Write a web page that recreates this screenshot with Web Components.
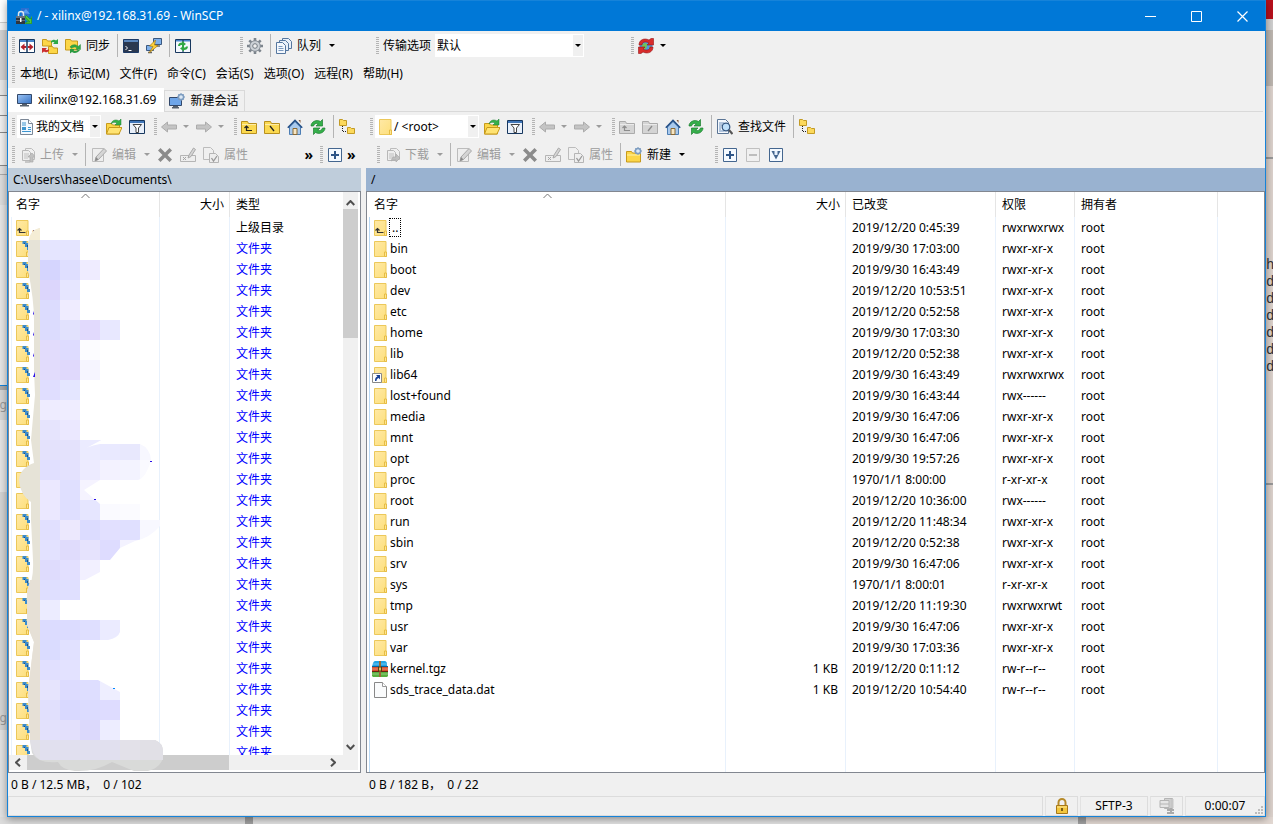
<!DOCTYPE html>
<html lang="zh-CN">
<head>
<meta charset="utf-8">
<title>/ - xilinx@192.168.31.69 - WinSCP</title>
<style>
html,body{height:100%;margin:0}
body{font:12px/16px "Noto Sans","Noto Sans CJK SC",sans-serif;color:#000;overflow:hidden;background:#e2e2e2}
</style>
</head>
<body>
<scp-desktop></scp-desktop>
<script>
const define=(name,html,setup)=>{
  const t=document.createElement('template');t.innerHTML=html;
  customElements.define(name,class extends HTMLElement{
    connectedCallback(){
      if(this.shadowRoot)return;
      const r=this.attachShadow({mode:'open'});
      r.append(t.content.cloneNode(true));
      if(setup)setup.call(this,r);
    }
  });
};

/* ---------- icons ---------- */
const Y='fill="#fcd648" stroke="#c79a1c"';
const pageG='<path d="M6.5 1.5h6l3 3v8h-9z" fill="#f0f0f0" stroke="#bcbcbc"/><path d="M3.5 3.5h6l2 2v8h-8z" fill="#eee" stroke="#b8b8b8"/><path d="M5 7h5M5 9h5M5 11h4" stroke="#c0c0c0"/>';
const folderUp=(f,s,d)=>`<path d="M.5 2.5h6l1 2h8v10h-15z" fill="${f}" stroke="${s}"/><path d="M1 5.500h14" stroke="#fff" stroke-opacity=".5"/>${d}`;
const green='<path d="M1 7C1 3 6 0 10.500 2.500L12.500.500V7H6L8.300 4.800C6 3.700 4 5 3.500 7z" fill="#35b04a" stroke="#1d7d30" stroke-width=".7"/><path d="M15 9c0 4-5 7-9.500 4.500L3.500 15.500V9H10L7.700 11.200C10 12.300 12 11 12.500 9z" fill="#35b04a" stroke="#1d7d30" stroke-width=".7"/>';
const gearS='<circle cx="12" cy="4" r="2.600" fill="#dbe8f5" stroke="#7c9cc0" stroke-width="1.500"/><path d="M12 0v1.500M12 6.500V8M8 4h1.500M14.500 4H16M9.300 1.300l1 1M13.700 5.700l1 1M9.300 6.700l1-1M13.700 2.300l1-1" stroke="#7c9cc0"/>';
const funnel='<path d="M.5 1.500h15v13H.500z" fill="#e9f0fa" stroke="#17375e"/><path d="M1 2h14v2H1z" fill="#4076b8"/><path d="M4 5.500h8.500L9.500 9v4.500h-2.500V9z" fill="#fff" stroke="#444"/>';
const house='<path d="M2.500 8v7.500h11V8L8 2.500z" fill="#a9c9ec" stroke="#4d7eb4"/><path d="M.8 8.800L8 1.500l7.200 7.300" fill="none" stroke="#244f86" stroke-width="1.600"/><path d="M6 9.500h4v6H6z" fill="#f7e6c4" stroke="#8a6a35"/><path d="M11.500 1h2v3z" fill="#8a5a38"/>';
const tree='<path d="M.5.500h3l1 1h3v5h-7z" fill="#fcd95c" stroke="#c39b25"/><path d="M8.500 8.500h3l1 1h3v5h-7z" fill="#fcd95c" stroke="#c39b25"/><path d="M3.500 7v5.500H8" fill="none" stroke="#222" stroke-dasharray="1 1"/>';
const fold='<defs><linearGradient id="g" x2="1" y2="1"><stop stop-color="#ffe9a6"/><stop offset="1" stop-color="#fddf7b"/></linearGradient></defs><path d="M2.500.500h11.500v11h.5v4h-12z" fill="url(#g)" stroke="#ecc85a"/><path d="M12.500 15.500v-4.500h2v4.500z" fill="#ffe594" stroke="#e6bd45"/>';
const I={
app:'<path d="M5 0h8v8H5z" fill="#2a6fd0"/><path d="M6 5l4-4 4 5" fill="#5a9df0"/><path d="M8.500 7L15 13V8.500h1V16H8.500v-1H13L7.500 9z" fill="#3cb33c"/><path d="M9 9l5 5h-4v1.500h5.500V10l-1.500 1-3.500-3.500z" fill="#4cc840" stroke="#1c7c26" stroke-width=".5"/><path d="M2.500 8V6a2.500 2.500 0 015 0v2" fill="none" stroke="#dfe6ee" stroke-width="1.500"/><path d="M0 8h9v8H0z" fill="#30363e"/><path d="M0 8h9v2H0zM0 12h9v1H0z" fill="#68717d"/><path d="M4 10h1.500v4H4z" fill="#fff"/>',
compare:'<path d="M.5 1.500h15v13H.500z" fill="#fff" stroke="#17375e"/><path d="M1 2h14v2H1z" fill="#4a86cc"/><path d="M8 1v14" stroke="#17375e" stroke-width="1.500"/><path d="M1.500 9l4-3.500V8H7v2H5.500v2.500zM14.500 9l-4-3.500V8H9v2h1.500v2.500z" fill="#b3202a"/>',
sync:`<path d="M.5 1.500h4l1 1.500h4v5h-9z" ${Y}/><path d="M6.500 8.500h4l1 1.500h4v5.500h-9z" ${Y}/><path d="M9 3c3-2 4-1 5-.5L16 1v5h-5l1.500-1.500C11.500 3.500 10 4 9 5z" fill="#2fa844"/><path d="M7 13c-3 2-4 1-5 .5L0 15v-5h5l-1.500 1.500C4.500 12.500 6 12 7 11z" fill="#cc2f2f"/>`,
syncb:`<path d="M.5 1.500h5l1 1.500h6v9h-12z" ${Y}/><path d="M5 9c2-3 6-3 8-.5L15.500 6.500v5H10.500L12 10C10 8.500 8 9 7 10.500z" fill="#2fa844" stroke="#1d7d30" stroke-width=".4"/><path d="M15 12c-2 3-6 4-8 2L5 15.500V11h5l-1.500 1.500C10 13.500 12 13 12.500 12z" fill="#2b9a40"/>`,
term:'<path d="M.5 1.500h15v13H.500z" fill="#2a3850" stroke="#1d3a66"/><path d="M1 2h14v2H1z" fill="#5a86bd"/><path d="M2.500 8l2 2-2 2" fill="none" stroke="#fff"/><path d="M5.500 12.500h3" stroke="#fff"/>',
putty:'<path d="M7.500.500h8v6h-8z" fill="#7fb0ea" stroke="#3a5880"/><path d="M.5 7.500h7v5h-7z" fill="#7fb0ea" stroke="#3a5880"/><path d="M10 8h4M2 14.500h4" stroke="#666" stroke-width="1.500"/><path d="M9.500 2L3.500 8l3.500.500-4 6.500L12 7.500 8.500 7z" fill="#ffd23a" stroke="#a87a10" stroke-width=".7"/>',
synbr:'<path d="M.5 1.500h15v13H.500z" fill="#f4f8fd" stroke="#17375e"/><path d="M1 2h14v1.500H1z" fill="#4a86cc"/><path d="M8 2v12" stroke="#17375e" stroke-width="1.200"/><path d="M3 8c0-2.500 2-3.500 4-3.500V3l4 3-4 3V7C5.500 7 5 7.500 5 8zM13 8.500c0 2.500-2 3.500-4 3.500v1.500l-4-3 4-3v2c1.500 0 2-.5 2-1z" fill="#2fa844"/>',
gear:'<path d="M8 0v3M8 13V16M0 8h3M13 8H16M2.300 2.300l2 2M11.700 11.700l2 2M2.300 13.700l2-2M11.700 4.300l2-2" stroke="#7d858d" stroke-width="2.600"/><circle cx="8" cy="8" r="5.300" fill="#ccd1d6" stroke="#858d95"/><circle cx="8" cy="8" r="2.300" fill="#f0f0f0" stroke="#737b83"/>',
queue:'<path d="M6.500.500h6l3 3v7h-9z" fill="#e8f0fa" stroke="#56779f"/><path d="M3.500 2.500h6l3 3v7h-9z" fill="#e8f0fa" stroke="#56779f"/><path d="M.5 4.500h6l3 3v8h-9z" fill="#f4f8fd" stroke="#56779f"/><path d="M2.500 8.500h4M2.500 10.500h5M2.500 12.500h5" stroke="#7b9ac0"/>',
globe:'<circle cx="8" cy="8" r="6.500" fill="#4f97e8"/><path d="M5 6c2-2 5-1 4 2s-1 4-3 3-3-3-1-5zM11 8l3 1-2 4z" fill="#6fc25a"/><path d="M1 7C1 2 6-.5 11 2l2-1.500h2.500V7H9l2-2C7.500 3 4 4 4 7z" fill="#d92c2c" stroke="#961616" stroke-width=".6"/><path d="M15 9c0 5-5 7.500-10 5l-2 1.500H.5V9H7l-2 2c3.500 2 7 1 7-2z" fill="#d92c2c" stroke="#961616" stroke-width=".6"/>',
monitor:'<defs><linearGradient id="m" x2="1" y2="1"><stop stop-color="#9cc4f4"/><stop offset="1" stop-color="#3672c4"/></linearGradient></defs><path d="M.5 2.500h14v9H.500z" fill="url(#m)" stroke="#32486a"/><path d="M5 12h5v1H5zM3 13h9v1.500H3z" fill="#56606c"/>',
newmon:'<path d="M.5 4.500h12v8H.500z" fill="#6ea5e8" stroke="#32486a"/><path d="M4 13h5v1H4zM3 14h7v1.500H3z" fill="#56606c"/>'+gearS,
doc:'<path d="M1.500.500h8l4 4v11h-12z" fill="#f3f9ff" stroke="#7b8796"/><path d="M9.500.500v4h4" fill="#fff" stroke="#7b8796"/><path d="M3 4h4M3 6h4M3 12.500h9M3 10.500h4M9 10.500h3M9 8.500h3" stroke="#3c95d0"/><path d="M3 8h4v2H3z" fill="#3c95d0"/>',
open:`<path d="M.5 4.500h5l1 1.500h7v9h-13z" ${Y}/><path d="M3 8.500h13l-3 6.500H.500z" fill="#ffe372" stroke="#c79a1c"/><path d="M5 5c1-4 5-5 8-3l2-2v6H9l2-2C9 3 7 3 5 5z" fill="#35b04a" stroke="#1d7d30" stroke-width=".5"/>`,
filter:funnel,
back:'<path d="M.5 8L6.500 3v3h9v4h-9v3z" fill="#c4c4c4" stroke="#acacac"/>',
fwd:'<path d="M15.500 8L9.500 3v3h-9v4h9v3z" fill="#c4c4c4" stroke="#acacac"/>',
up:folderUp('#fbd950','#b8901e','<path d="M5.500 12V7M3.500 9l2-2 2 2M5 11.500h6" fill="none" stroke="#222" stroke-width="1.200"/>'),
root:folderUp('#fbd950','#b8901e','<path d="M6 7l4 5" stroke="#222" stroke-width="1.300"/>'),
upg:folderUp('#d4d4d4','#ababab','<path d="M5.500 12V7M3.500 9l2-2 2 2M5 11.500h6" fill="none" stroke="#8c8c8c" stroke-width="1.200"/>'),
rootg:folderUp('#d4d4d4','#ababab','<path d="M10 7l-4 5" stroke="#8c8c8c" stroke-width="1.300"/>'),
home:house,refresh:green,tree,
transfer:pageG+'<path d="M6 15h5V10h-2l4-4 3.500 4H14v5z" fill="#c0c0c0" stroke="#aaa" stroke-width=".7"/>',
transdn:pageG+'<path d="M7 14l2-4h3V7l4 4-4 4v-2H9z" fill="#c0c0c0" stroke="#aaa" stroke-width=".7"/>',
edit:'<path d="M1.500 1.500h11v13h-11z" fill="#eee" stroke="#bcbcbc"/><path d="M4 14l1-4 8-8.500 2.500 2.500-8 8.500z" fill="#d5d5d5" stroke="#a9a9a9"/><path d="M4 14l1-4 2.500 2.500z" fill="#888"/>',
del:'<path d="M1 3.500L3.500 1 8 5.500 12.500 1 15 3.500 10.500 8 15 12.500 12.500 15 8 10.500 3.500 15 1 12.500 5.500 8z" fill="#8b8b8b"/>',
ren:'<path d="M.5 8.500h15v6H.500z" fill="#eee" stroke="#b5b5b5"/><path d="M3 10l3 3M6 10l-3 3" stroke="#a5a5a5"/><path d="M8 11l1-3 4.500-7 2 1.500L11 9.500z" fill="#d5d5d5" stroke="#a9a9a9"/>',
prop:'<path d="M.5.500h7l3 3v9H.500z" fill="#f0f0f0" stroke="#bcbcbc"/><path d="M6.500 6.500h6l3 3v6h-9z" fill="#eee" stroke="#b5b5b5"/><path d="M8.500 11l2 3 3.500-5" fill="none" stroke="#999" stroke-width="1.300"/>',
plus:'<path d="M1.500 1.500h13v13h-13z" fill="#f5faff" stroke="#44668f"/><path d="M8 4v8M4 8h8" stroke="#2f5688" stroke-width="2"/>',
minus:'<path d="M1.500 1.500h13v13h-13z" fill="#f0f0f0" stroke="#c0c0c0"/><path d="M4 8h8" stroke="#bdbdbd" stroke-width="2"/>',
sel:'<path d="M1.500 1.500h13v13h-13z" fill="#f5faff" stroke="#44668f"/><path d="M3.500 4h9L8 12.500z" fill="#44668f"/><path d="M6.500 4h3v4h-3z" fill="#e6f0fc"/>',
find:'<path d="M.5.500h8l3 3v11H.500z" fill="#f4f8fd" stroke="#5a7494"/><path d="M2 4h5M2 6h3M2 8h2M2 10h2M2 12h5" stroke="#6f92bd"/><circle cx="9" cy="8" r="3.800" fill="#bfe0fa" stroke="#345680" stroke-width="1.300"/><path d="M12 11l3.500 4" stroke="#555" stroke-width="2.200"/>',
newf:`<path d="M.5 4.500h5l1 1.500h8v9h-14z" ${Y}/><path d="M1 8h13" stroke="#fff2a8"/>`+gearS,
folder:fold,
parent:fold+'<path d="M5.500 13V8.500M3.500 10.500l2-2 2 2M5.500 12.500h6" fill="none" stroke="#333" stroke-width="1.200"/>',
local:fold+'<path d="M8.500 0h4v2h2v4h1.500v3h-3V6h-2V3h-2.500z" fill="#3b8ccc"/><path d="M10 2h1v1h-1zM13 4h1v2h-1z" fill="#1c4f86"/>',
link:fold+'<path d="M.5 6.500h9v9h-9z" fill="#fff" stroke="#888"/><path d="M3 14c0-3 1-4 2.500-4.500L4 8h4v4.500L6.700 11C5 11.500 4.500 12.500 4.500 14z" fill="#173f96"/>',
tgz:'<path d="M1 2q1-2 2-2h10q1 0 2 2v3.500H0z" fill="#22a5e6"/><path d="M0 5h16v1H0z" fill="#0c5f96"/><path d="M0 6h16v4H0z" fill="#d8502c"/><path d="M0 10h16v1H0z" fill="#6a2110"/><path d="M0 11h16v4l-1 1H1l-1-1z" fill="#58b03e"/><path d="M0 3h16M0 8h16M0 13h16" stroke="#fff" stroke-opacity=".35"/><path d="M7 0h2v16H7z" fill="#9a6a35"/><path d="M6.500 6h3v4h-3z" fill="#e3bb62" stroke="#5a3c12"/>',
file:'<path d="M2.500.500h8l4 4v11h-12z" fill="#fafbfc" stroke="#888"/><path d="M10.500.500v4h4" fill="#fff" stroke="#999"/>',
lock:'<path d="M4.500 8V4.500a3.500 3.500 0 017 0V8" fill="none" stroke="#b68a2a" stroke-width="2"/><path d="M2.500 7.500h11v8h-11z" fill="#f3c63c" stroke="#a87818"/><path d="M3 9h10" stroke="#ffe894"/><path d="M8 10v3" stroke="#553a08" stroke-width="1.500"/>',
zip:'<path d="M5.500.500h8v10h-8z" fill="#d2d2d2" stroke="#b4b4b4"/><path d="M1 2.500h9v7H1z" fill="#e5e5e5" stroke="#b4b4b4"/><path d="M1 6h9" stroke="#b4b4b4"/><path d="M11.500 1h3v9h-3z" fill="#c6c6c6"/><path d="M12 10v4M8 12h7M8 15h7" stroke="#aaa" stroke-width="2"/>'
};
customElements.define('scp-icon',class extends HTMLElement{
  static observedAttributes=['name'];
  connectedCallback(){this.draw()}
  attributeChangedCallback(){this.draw()}
  draw(){
    const r=this.shadowRoot||this.attachShadow({mode:'open'});
    r.innerHTML='<style>:host{display:block;width:16px;height:16px;flex:none}svg{display:block}</style><svg width="16" height="16" viewBox="0 0 16 16" aria-hidden="true">'+(I[this.getAttribute('name')]||'')+'</svg>';
  }
});

/* ---------- toolbar parts ---------- */
define('tool-bar',`<style>:host{display:flex;align-items:center;height:27px;flex:none;box-sizing:border-box}
i{width:3px;height:17px;margin:0 1px 0 0;flex:none;background:repeating-linear-gradient(#b4b4b4 0 1px,#f0f0f0 1px 2px)}</style><i></i><slot></slot>`);
define('tool-sep','<style>:host{display:block;width:1px;height:23px;margin:0 2px 0 3px;background:#b4b4b4;flex:none}</style>');
define('tool-button',`<style>:host{display:block;flex:none}
button{all:unset;box-sizing:border-box;display:flex;align-items:center;gap:5px;height:23px;padding:0 4px 0 3px;white-space:nowrap}
button:disabled{color:#9c9c9c}
b{border:3px solid transparent;border-top-color:currentColor;border-bottom:0;margin-left:3px;width:0}
:host([split]) b{margin-left:6px}</style>
<button><scp-icon></scp-icon><slot></slot></button>`,
 function(r){
  const b=r.querySelector('button');
  r.querySelector('scp-icon').setAttribute('name',this.getAttribute('icon'));
  b.disabled=this.hasAttribute('disabled');
  b.setAttribute('aria-label',this.getAttribute('label')||this.textContent);
  if(this.hasAttribute('drop'))b.append(document.createElement('b'));
  if(this.hasAttribute('split')){b.style.gap='0';b.append(document.createElement('b'))}
 });
define('tool-more','<style>:host{display:block}button{all:unset;display:block;font:bold 14px/14px "Noto Sans",sans-serif;height:22px}</style><button aria-label="更多">»</button>');
define('tool-combo',`<style>:host{display:block;position:relative;height:23px;flex:none;margin:0 2px 0 1px}
select{appearance:none;font:inherit;color:inherit;width:100%;height:23px;border:0;border-radius:0;background:#fff;padding:0 12px 0 2px;outline:0}
:host([icon]) select{padding-left:19px}
scp-icon{position:absolute;left:2px;top:4px}
span{position:absolute;right:1px;top:1px;width:10px;height:21px;background:#f0f0f0;pointer-events:none;display:grid;place-items:center}
b{border:3px solid transparent;border-top-color:#000;border-bottom:0}</style><select><option></option></select><span><b></b></span>`,
 function(r){
  r.querySelector('option').textContent=this.getAttribute('value');
  r.querySelector('select').setAttribute('aria-label',this.getAttribute('label'));
  if(this.hasAttribute('icon')){const i=document.createElement('scp-icon');i.setAttribute('name',this.getAttribute('icon'));r.append(i)}
 });

/* ---------- window chrome ---------- */
define('title-bar',`<style>:host{display:flex;align-items:center;height:31px;background:#0078d7;color:#fff;padding-left:8px;border-top:1px solid #1683d9;box-sizing:border-box;flex:none}
h1{font:inherit;margin:0 0 0 5px;flex:1}
button{all:unset;width:46px;height:30px;display:grid;place-items:center}</style>
<scp-icon name="app"></scp-icon><h1><slot></slot></h1>
<button aria-label="最小化"><svg width="11" height="11"><path d="M0 5.500h11" stroke="#fff"/></svg></button>
<button aria-label="最大化"><svg width="11" height="11"><path d="M.5.500h10v10H.500z" fill="none" stroke="#fff"/></svg></button>
<button aria-label="关闭"><svg width="11" height="11"><path d="M.5.500l10 10M10.500.500l-10 10" stroke="#fff" stroke-width="1.200"/></svg></button>`);
define('main-toolbar',`<style>:host{display:flex;height:29px;align-items:center;padding-left:4px;flex:none}
.a{width:228px}.b{width:136px}.c{width:255px}label{margin:0 3px 0 3px}.c tool-combo{width:149px}</style>
<tool-bar class="a"><tool-button icon="compare" label="比较目录"></tool-button><tool-button icon="sync" label="同步浏览"></tool-button><tool-button icon="syncb">同步</tool-button><tool-sep></tool-sep><tool-button icon="term" label="终端"></tool-button><tool-button icon="putty" label="PuTTY"></tool-button><tool-sep></tool-sep><tool-button icon="synbr" label="刷新"></tool-button></tool-bar>
<tool-bar class="b"><tool-button icon="gear" label="设置"></tool-button><tool-sep></tool-sep><tool-button icon="queue" drop>队列</tool-button></tool-bar>
<tool-bar class="c"><label>传输选项</label><tool-combo value="默认" label="传输选项"></tool-combo></tool-bar>
<tool-bar><tool-button icon="globe" split label="会话"></tool-button></tool-bar>`);
define('menu-bar',`<style>:host{display:flex;height:28px;align-items:center;padding-left:4px;flex:none}
nav{display:flex;gap:10px;padding-left:4px}a{color:inherit;text-decoration:none;white-space:nowrap}</style>
<tool-bar><nav><a href="#">本地(L)</a><a href="#">标记(M)</a><a href="#">文件(F)</a><a href="#">命令(C)</a><a href="#">会话(S)</a><a href="#">选项(O)</a><a href="#">远程(R)</a><a href="#">帮助(H)</a></nav></tool-bar>`);
define('session-tabs',`<style>:host{display:flex;height:24px;align-items:flex-end;border-bottom:1px solid #d9d9d9;box-sizing:border-box;margin-right:2px;flex:none}
button{all:unset;box-sizing:border-box;display:flex;align-items:center;gap:5px;height:21px;padding:0 5px 0 4px;border:1px solid #d9d9d9;border-bottom:0}
.on{background:#fff;height:24px;border-color:#fff;padding:0 7px 2px 8px;margin-bottom:-1px}</style>
<button class="on"><scp-icon name="monitor"></scp-icon>xilinx@192.168.31.69</button><button><scp-icon name="newmon"></scp-icon>新建会话</button>`);

/* ---------- panels ---------- */
define('panel-shell',`<style>:host{display:flex;flex-direction:column;min-width:0;min-height:0}
.bars{height:56px;flex:none;padding-left:4px;padding-top:1px;box-sizing:border-box}
.path{height:23px;line-height:23px;background:var(--path);padding-left:5px;flex:none}
.foot{height:23px;line-height:24px;padding-left:3px;flex:none;white-space:pre;color:#000}
.list{flex:1;min-height:0;display:flex;flex-direction:column;border:1px solid #828790;background:#fff;position:relative}
::slotted([slot=list]){flex:1;min-height:0}</style>
<div class="bars"><slot name="bars"></slot></div><div class="path"><slot name="path"></slot></div><div class="list"><slot name="list"></slot></div><div class="foot"><slot name="foot"></slot></div>`);

const tableCss=`table{border-collapse:separate;border-spacing:0;table-layout:fixed;width:100%}
th,td{padding:0 6px 0 6px;font-weight:400;text-align:left;white-space:nowrap;overflow:hidden;box-sizing:border-box;border-right:1px solid #e8f1fc}
th{height:25px;border-color:#e5e5e5}td{height:21px}
th:last-child,td:last-child{border:0}
.n{text-align:right}th.n{padding-right:5px}td.n{padding-right:7px}
.w{display:flex;align-items:center;gap:2px}`;
const cell=(t,c='')=>`<td${c?` class="${c}"`:''}>${t}</td>`;

define('local-list',`<style>:host{display:grid;grid-template:1fr 17px/1fr 15px;padding-right:2px;position:relative}
${tableCss}
.view{overflow:hidden;min-height:0;padding-left:3px;background:linear-gradient(#e8f1fc,#e8f1fc) 2px 25px/1px 100% no-repeat,
linear-gradient(#e8f1fc,#e8f1fc) 150px 0/1px 100% no-repeat,linear-gradient(#e8f1fc,#e8f1fc) 220px 0/1px 100% no-repeat}
table{margin-left:-1px}.w{margin-left:-3px}th:first-child{padding-left:5px}
.blue{color:#00f}
.sb{background:#f0f0f0;display:flex;align-items:center;box-sizing:border-box}
.v{flex-direction:column;padding:8px 0 5px}.v i{width:15px;height:129px;background:#cdcdcd;margin-top:3px}.v svg:last-child{margin-top:auto}
.h{padding:0 7px 0 6px;height:15px}.h i{width:202px;height:15px;background:#cdcdcd;margin-left:6px}.h svg:last-child{margin-left:auto}
.cn{background:#f0f0f0;height:15px}
.mask{position:absolute;left:0;top:0;pointer-events:none}
.sort{position:absolute;left:72px;top:1px}
svg{flex:none}</style>
<div class="view"><table><colgroup><col style="width:149px"><col style="width:70px"><col></colgroup><thead><tr><th>名字</th><th class="n">大小</th><th>类型</th></tr></thead><tbody></tbody></table></div>
<div class="sb v"><svg width="9" height="6"><path d="M.7 5l3.800-4 3.800 4" fill="none" stroke="#505050" stroke-width="2"/></svg><i></i><svg width="9" height="6"><path d="M.7 1l3.800 4 3.800-4" fill="none" stroke="#505050" stroke-width="2"/></svg></div>
<div class="sb h"><svg width="6" height="9"><path d="M5 .7L1 4.500l4 3.800" fill="none" stroke="#505050" stroke-width="2"/></svg><i></i><svg width="6" height="9"><path d="M1 .7l4 3.800-4 3.800" fill="none" stroke="#505050" stroke-width="2"/></svg></div><div class="cn"></div>
<svg class="sort" width="9" height="6"><path d="M.5 5l4-4 4 4" fill="none" stroke="#777"/></svg>
<svg class="mask" width="160" height="580" viewBox="9 192 160 580" aria-hidden="true"></svg>`,
 function(r){
  let h='<tr>'+cell('<div class="w"><scp-icon name="parent"></scp-icon>.</div>')+cell('')+cell('上级目录')+'</tr>';
  for(let i=0;i<25;i++)h+='<tr>'+cell(`<div class="w"><scp-icon name="${i==11||i==12?'folder':'local'}"></scp-icon></div>`)+cell('')+cell('文件夹','blue')+'</tr>';
  r.querySelector('tbody').innerHTML=h;
  const M=['e5e5ff e5e5ff','d5d5fe dfdfff efecff','dcd6fc e6e6ff','dcdcfe efecff','dcdcfe e2e2fd e2dafd e8e8ff','e2dcfc dedcff fcfcff','e2dcfc e0d9fc f6f5ff','e0deff e4e6ff','eeecff efedff','e6e4fd ebe8ff','e4e2fc e4e2fc ebebff e9e9ff e8e8fd f7f7ff','e1e0ff e4e2fe edebff f3f2ff f3f3ff fafaff','ebe8ff e0e0ff f5f3ff','ebe8ff dfdfff e6e6ff fafaff fbfbff','e1e0ff ece8fd dcdcff e2e0ff e0e0ff f8f8ff','e3e2ff e0dcfc e6e3fd dedcff f3f2ff','dfdcfd e3e0ff f2f0ff','dfdfff e0e0ff','ececff','dcdcff dcdcff dfdfff ebebff','dadcff e1e1ff','e1e0ff e3e2ff','e6e4fd dddcff dedeff eeeeff','e1e0fd d9d9ff dcdcff dedcff','e3e1fc e3e0fc dcd9fc ededff'];
  let s='<defs><clipPath id="c"><path d="M40 240H120V430L79 452Q88 446 100 444H140Q150 448 151 460Q146 478 138 480H100L84 490L100 504H160V526Q150 538 135 541L120 548L110 560L100 562V572L85 580H120V632Q118 638 108 640H80V680H98L120 692V742H40z"/></clipPath></defs><g clip-path="url(#c)">';
  M.forEach((row,y)=>row.split(' ').forEach((c,x)=>s+=`<rect x="${40+x*20}" y="${240+y*20}" width="20" height="20" fill="#${c}" shape-rendering="crispEdges"/>`));
  s+='</g><path d="M40 228Q30 230 28 244V270Q34 300 34 320V370L35 395L31 440L34 463Q20 468 19 480Q20 495 31 502V520L33 560Q34 580 27 592V625L34 642L28 690L30 740H40z" fill="#e6e3d7"/><path d="M40 228Q30 230 29 240H40z" fill="#f5edd5"/><path d="M40 580H30L27 592V625L34 642L28 690L30 740H40z" fill="#e6e0d6"/><path d="M30 740H155Q163 743 163 752V758Q160 768 148 771H134L112 762Q95 772 75 771Q62 770 58 762Q38 764 32 753z" fill="#d9dad9"/><path d="M30 740H155Q163 743 163 752V760H40Q32 756 30 740z" fill="#e1e0e6"/><path d="M40 740H120V760H40z" fill="#e1e0ef"/><path d="M120 740H140V760H120z" fill="#e3e1e9"/>';
  s+='<path d="M33 314l1-3v4zM33 335l1-3v4zM33 356l1-3v4zM33 377l2-5v5zM150 461h2v1h-2zM94 499h2v1h-2z" fill="#2a10e8"/><path d="M113 688h2v1h-2z" fill="#08f"/>';
  r.querySelector('.mask').innerHTML=s;
 });

define('remote-list',`<style>:host{display:flex;overflow:hidden;position:relative;background:linear-gradient(#b9d9f5,#b9d9f5) 2px 25px/1px 100% no-repeat}
${tableCss}
table{height:100%;padding-left:1px}.w{margin-left:-2px}
.fill td{height:auto}
.focus{outline:1px dotted #000;padding:0 2px;margin:0 -2px 0 0;line-height:17px}
.sort{position:absolute;left:176px;top:1px}</style>
<table><colgroup><col style="width:358px"><col style="width:120px"><col style="width:150px"><col style="width:79px"><col style="width:143px"><col></colgroup><thead><tr><th>名字</th><th class="n">大小</th><th>已改变</th><th>权限</th><th>拥有者</th><th></th></tr></thead><tbody></tbody></table>
<svg class="sort" width="9" height="6"><path d="M.5 5l4-4 4 4" fill="none" stroke="#777"/></svg>`,
 function(r){
  const X='rwxr-xr-x';
  const rows=[['..','2019/12/20 0:45:39','rwxrwxrwx','parent'],['bin','2019/9/30 17:03:00',X],['boot','2019/9/30 16:43:49',X],['dev','2019/12/20 10:53:51',X],['etc','2019/12/20 0:52:58',X],['home','2019/9/30 17:03:30',X],['lib','2019/12/20 0:52:38',X],['lib64','2019/9/30 16:43:49','rwxrwxrwx','link'],['lost+found','2019/9/30 16:43:44','rwx------'],['media','2019/9/30 16:47:06',X],['mnt','2019/9/30 16:47:06',X],['opt','2019/9/30 19:57:26',X],['proc','1970/1/1 8:00:00','r-xr-xr-x'],['root','2019/12/20 10:36:00','rwx------'],['run','2019/12/20 11:48:34',X],['sbin','2019/12/20 0:52:38',X],['srv','2019/9/30 16:47:06',X],['sys','1970/1/1 8:00:01','r-xr-xr-x'],['tmp','2019/12/20 11:19:30','rwxrwxrwt'],['usr','2019/9/30 16:47:06',X],['var','2019/9/30 17:03:36',X],['kernel.tgz','2019/12/20 0:11:12','rw-r--r--','tgz','1 KB'],['sds_trace_data.dat','2019/12/20 10:54:40','rw-r--r--','file','1 KB']];
  r.querySelector('tbody').innerHTML=rows.map(([n,d,p,i='folder',z=''],k)=>'<tr>'+cell(`<div class="w"><scp-icon name="${i}"></scp-icon><span${k?'':' class="focus"'}>${n}</span></div>`)+cell(z,'n')+cell(d)+cell(p)+cell('root')+cell('')+'</tr>').join('')+'<tr class="fill">'+cell('').repeat(6)+'</tr>';
 });

define('local-panel',`<style>:host{display:flex;min-width:0;min-height:0;--path:#bfcddb}panel-shell{flex:1}
.r{display:flex}.r+.r{height:28px;align-items:flex-end}.a{width:142px}.b{width:80px}.u{width:308px}tool-combo{width:84px}.u tool-more{margin-left:auto;margin-right:7px}</style>
<panel-shell><div slot="bars">
<div class="r"><tool-bar class="a"><tool-combo icon="doc" value="我的文档" label="本地驱动器"></tool-combo><tool-button icon="open" label="打开目录"></tool-button><tool-button icon="filter" label="过滤"></tool-button></tool-bar><tool-bar class="b"><tool-button icon="back" disabled split label="后退"></tool-button><tool-button icon="fwd" disabled split label="前进"></tool-button></tool-bar><tool-bar><tool-button icon="up" label="上级目录"></tool-button><tool-button icon="root" label="根目录"></tool-button><tool-button icon="home" label="主目录"></tool-button><tool-button icon="refresh" label="刷新"></tool-button><tool-sep></tool-sep><tool-button icon="tree" label="目录树"></tool-button></tool-bar></div>
<div class="r"><tool-bar class="u"><tool-button icon="transfer" disabled drop>上传</tool-button><tool-sep></tool-sep><tool-button icon="edit" disabled drop>编辑</tool-button><tool-button icon="del" disabled label="删除"></tool-button><tool-button icon="ren" disabled label="重命名"></tool-button><tool-button icon="prop" disabled>属性</tool-button><tool-more></tool-more></tool-bar><tool-bar><tool-button icon="plus" label="选择"></tool-button><tool-more></tool-more></tool-bar></div>
</div><span slot="path">C:\\Users\\hasee\\Documents\\</span><local-list slot="list"></local-list><span slot="foot">0 B / 12.5 MB，  0 / 102</span></panel-shell>`);
define('remote-panel',`<style>:host{display:flex;min-width:0;min-height:0;--path:#99b2d0}panel-shell{flex:1}
.r{display:flex}.r+.r{height:28px;align-items:flex-end}.a{width:162px}.b{width:80px}.u{width:338px}.s{margin-left:7px}tool-combo{width:104px}</style>
<panel-shell><div slot="bars">
<div class="r"><tool-bar class="a"><tool-combo icon="folder" value="/ &lt;root&gt;" label="远程目录"></tool-combo><tool-button icon="open" label="打开目录"></tool-button><tool-button icon="filter" label="过滤"></tool-button></tool-bar><tool-bar class="b"><tool-button icon="back" disabled split label="后退"></tool-button><tool-button icon="fwd" disabled split label="前进"></tool-button></tool-bar><tool-bar><tool-button icon="upg" disabled label="上级目录"></tool-button><tool-button icon="rootg" disabled label="根目录"></tool-button><tool-button icon="home" label="主目录"></tool-button><tool-button icon="refresh" label="刷新"></tool-button><tool-sep></tool-sep><tool-button icon="find">查找文件</tool-button><tool-sep></tool-sep><tool-button icon="tree" label="目录树"></tool-button></tool-bar></div>
<div class="r s"><tool-bar class="u"><tool-button icon="transdn" disabled drop>下载</tool-button><tool-sep></tool-sep><tool-button icon="edit" disabled drop>编辑</tool-button><tool-button icon="del" disabled label="删除"></tool-button><tool-button icon="ren" disabled label="重命名"></tool-button><tool-button icon="prop" disabled>属性</tool-button><tool-sep></tool-sep><tool-button icon="newf" drop>新建</tool-button></tool-bar><tool-bar><tool-button icon="plus" label="选择"></tool-button><tool-button icon="minus" disabled label="取消选择"></tool-button><tool-button icon="sel" label="全选"></tool-button></tool-bar></div>
</div><span slot="path">/</span><remote-list slot="list"></remote-list><span slot="foot">0 B / 182 B，  0 / 22</span></panel-shell>`);
define('status-bar',`<style>:host{display:grid;grid-template-columns:1fr 33px 68px 33px 80px;gap:2px;height:20px;flex:none}
div{border:1px solid #dcdcdc;border-left-color:#e2e2e2;display:grid;place-items:center;box-sizing:border-box;height:20px}
.t{position:relative}.t svg{position:absolute;right:1px;bottom:1px}</style>
<div></div><div><scp-icon name="lock"></scp-icon></div><div>SFTP-3</div><div><scp-icon name="zip"></scp-icon></div>
<div class="t">0:00:07<svg width="8" height="8" fill="#bcbcbc"><path d="M6 0h2v2H6zM3 3h2v2H3zM6 3h2v2H6zM0 6h2v2H0zM3 6h2v2H3zM6 6h2v2H6z"/></svg></div>`);
define('scp-window',`<style>:host{display:flex;flex-direction:column;box-sizing:border-box;background:#f0f0f0;border:1px solid #1683d9;border-top:0;min-height:0;box-shadow:0 2px 8px rgba(0,0,0,.4);position:relative}
main{flex:1;min-height:0;display:grid;grid-template-columns:353px 1fr;column-gap:5px}</style>
<title-bar>/ - xilinx@192.168.31.69 - WinSCP</title-bar><main-toolbar></main-toolbar><menu-bar></menu-bar><session-tabs></session-tabs>
<main><local-panel></local-panel><remote-panel></remote-panel></main><status-bar></status-bar>`);
define('scp-desktop',`<style>:host{display:grid;grid-template:minmax(0,1fr) 7px/7px minmax(0,1fr) 7px;height:100vh}
.l{background:linear-gradient(#fff 0 22px,#ccc 22px 23px,#f4f4f4 23px 30px,#d2d2d2 30px 80px,#e8e8e8 80px 95px,#888 95px 96px,#f0f0f0 96px 115px,#888 115px 116px,#f0f0f0 116px 132px,#888 132px 133px,#f0f0f0 133px 165px,#888 165px 166px,#e0e0e0 166px 174px,#aaa 174px 175px,#ddd 175px 205px,#e6e6e6 205px 385px,#1683d9 385px 386px,#aaa 386px 390px,#d6d6d6 390px 420px,#e4e4e4 420px 492px,#d4d4d4 492px 730px,#e2e2e2 730px);overflow:hidden;color:#999;padding-top:397px;box-sizing:border-box;display:flex;flex-direction:column;gap:297px}
.l span{direction:rtl}
.r{background:linear-gradient(#b8101c 0 19px,#d0d0d0 19px 30px,#bdb6b0 30px 86px,#dcd2cc 86px 157px,#999 157px 159px,#dcd2cc 159px 483px,#999 483px 485px,#dcd2cc 485px);font:14px/17px "Liberation Mono",monospace;color:#333;padding-top:257px;box-sizing:border-box;overflow:hidden;display:flex;flex-direction:column}
.b{grid-column:1/4;background:linear-gradient(90deg,#dcdcdc 245px,#a0a0a0 245px 253px,#e2e2e2 253px calc(100% - 195px),#a0a0a0 calc(100% - 195px) calc(100% - 187px),#e2d8d2 calc(100% - 187px))}</style>
<div class="l"><span>g</span><span>g</span></div><scp-window></scp-window><div class="r"><span>h</span><span>d</span><span>d</span><span>d</span><span>d</span><span>d</span><span>d</span></div><div class="b"></div>`);
</script>
</body>
</html>
